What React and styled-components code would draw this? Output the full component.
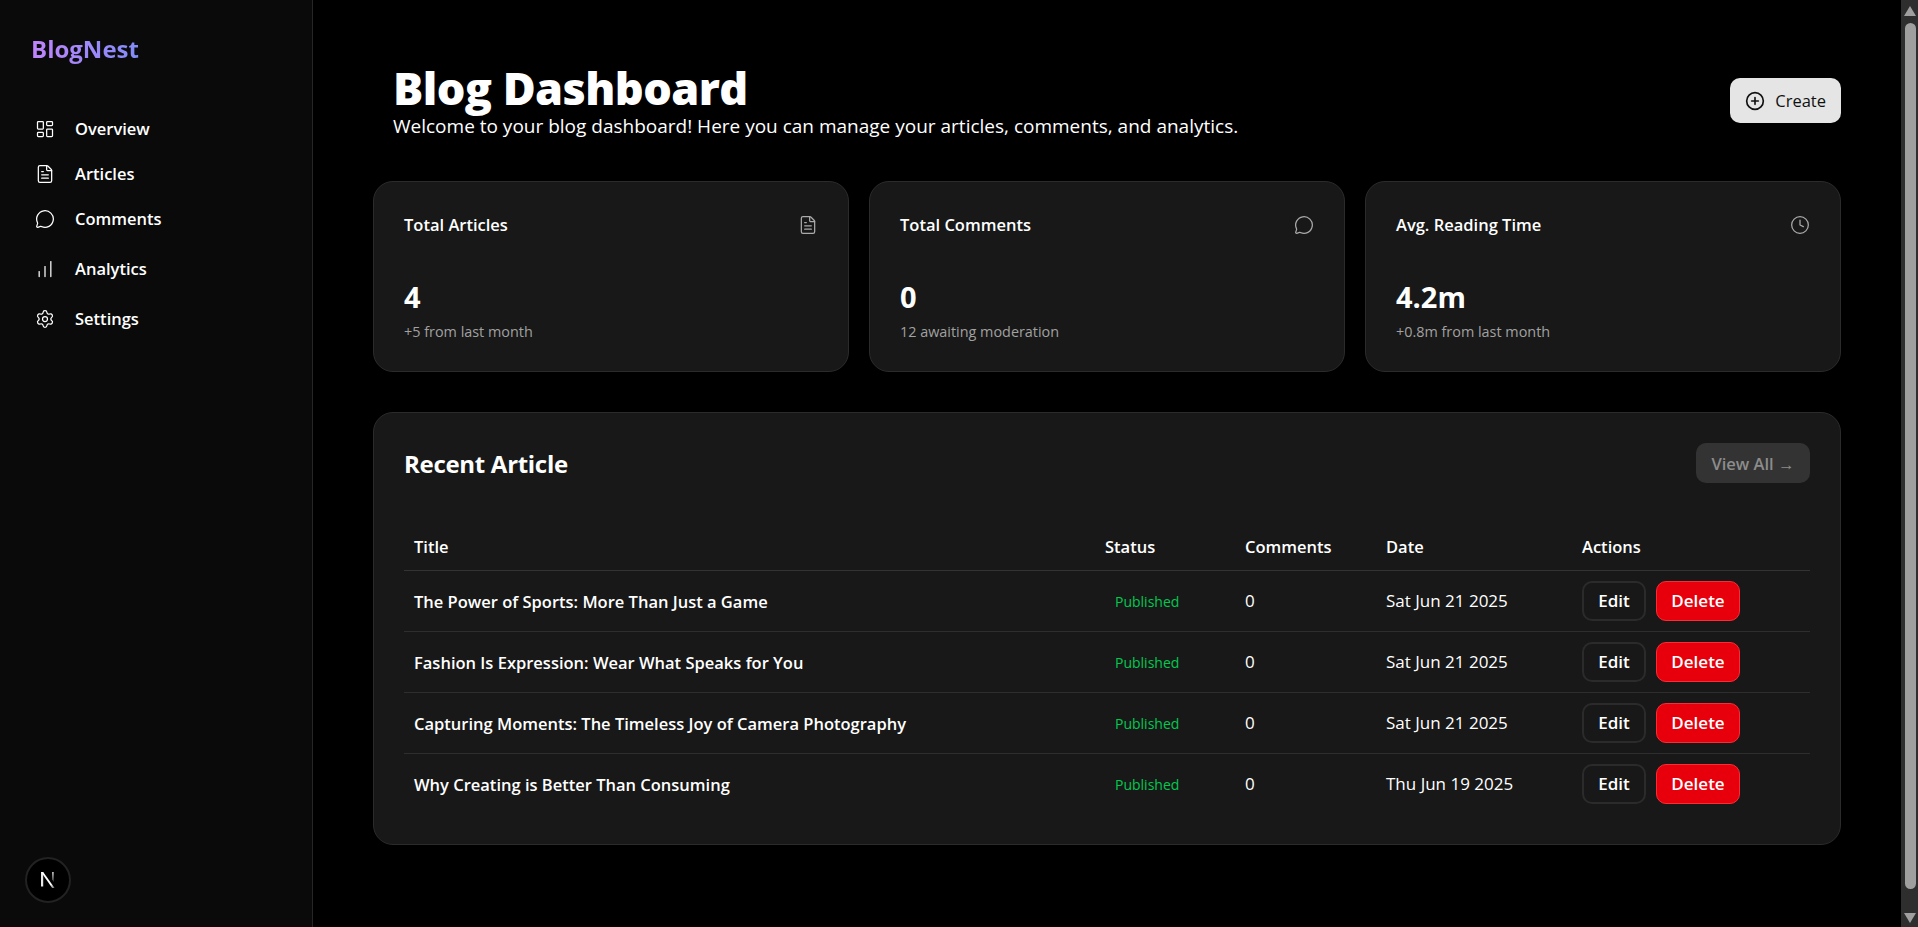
// App.jsx
import React from 'react';
import styled, { createGlobalStyle } from 'styled-components';
import {
  LayoutDashboard,
  FileText,
  MessageCircle,
  ChartNoAxesColumnIncreasing,
  Settings,
  CirclePlus,
  Clock,
} from 'lucide-react';

const GlobalStyle = createGlobalStyle`
  * {
    box-sizing: border-box;
  }

  html {
    background: #000;
  }

  body {
    margin: 0;
    background: #000;
    color: #fff;
    font-family: "Open Sans", "Noto Sans", "Liberation Sans", sans-serif;
  }
`;

const Layout = styled.div`
  display: flex;
  min-height: 927px;
  padding-right: 17px;
`;

const Sidebar = styled.aside`
  flex: 0 0 313px;
  padding: 30px;
  background: #0a0a0a;
  border-right: 1px solid #262626;
`;

const Logo = styled.div`
  font-size: 24px;
  line-height: 38px;
  font-weight: 700;
  background: linear-gradient(90deg, #c084fc, #818cf8);
  -webkit-background-clip: text;
  background-clip: text;
  color: transparent;
  width: fit-content;
  margin-left: 1px;
`;

const Nav = styled.nav`
  display: flex;
  flex-direction: column;
  margin-top: 38px;
`;

const NavItem = styled.a`
  display: flex;
  align-items: center;
  gap: 20px;
  height: ${(p) => p.$height}px;
  padding-left: 5px;
  color: #fff;
  font-size: 16.5px;
  font-weight: 600;
  text-decoration: none;
`;

const Main = styled.main`
  flex: 1;
  min-width: 0;
  padding: 60px 60px 0;
`;

const Header = styled.header`
  display: flex;
  justify-content: space-between;
  align-items: flex-start;
  padding-left: 20px;
  height: 121px;
`;

const Title = styled.h1`
  margin: 0;
  font-size: 45px;
  line-height: 56px;
  font-weight: 800;
  letter-spacing: -0.57px;
`;

const Subtitle = styled.p`
  margin: -2px 0 0;
  font-size: 19px;
  line-height: 24px;
`;

const CreateButton = styled.button`
  display: flex;
  align-items: center;
  gap: 10px;
  height: 45px;
  margin-top: 18px;
  padding: 0 15px;
  background: #e5e5e5;
  border: none;
  border-radius: 10px;
  color: #111;
  font-family: inherit;
  font-size: 16.5px;
  font-weight: 500;
`;

const Stats = styled.section`
  display: grid;
  grid-template-columns: repeat(3, 1fr);
  gap: 20px;
`;

const Card = styled.div`
  height: 191px;
  padding: 30px;
  background: #181818;
  border: 1px solid #2b2b2b;
  border-radius: 20px;
`;

const CardHead = styled.div`
  display: flex;
  justify-content: space-between;
  align-items: center;
  color: #aaa;
  height: 26px;
`;

const CardLabel = styled.span`
  margin-bottom: 2px;
  color: #fff;
  font-size: 16.5px;
  font-weight: 600;
`;

const CardValue = styled.div`
  margin-top: 40px;
  font-size: 29px;
  line-height: 38px;
  font-weight: 700;
`;

const CardNote = styled.div`
  margin-top: 6px;
  color: #a1a1a1;
  font-size: 14.4px;
  line-height: 20px;
`;

const Panel = styled.section`
  margin-top: 40px;
  padding: 30px;
  background: #181818;
  border: 1px solid #2b2b2b;
  border-radius: 20px;
`;

const PanelHead = styled.div`
  display: flex;
  justify-content: space-between;
  align-items: center;
  margin-bottom: 40px;
`;

const PanelTitle = styled.h2`
  margin: 0;
  font-size: 24px;
  font-weight: 700;
  letter-spacing: -0.3px;
`;

const ViewAll = styled.button`
  height: 40px;
  width: 114px;
  padding: 0;
  background: #333;
  border: none;
  border-radius: 10px;
  color: #8c8c8c;
  font-family: inherit;
  font-size: 16.5px;
  font-weight: 600;
`;

const Table = styled.table`
  width: 100%;
  table-layout: fixed;
  border-collapse: collapse;
`;

const Th = styled.th`
  height: 47px;
  padding: 0 10px;
  border-bottom: 1px solid #333;
  text-align: left;
  font-size: 16.5px;
  font-weight: 600;
`;

const Row = styled.tr`
  border-bottom: 1px solid #2e2e2e;

  &:last-child {
    border-bottom: none;
  }
`;

const Td = styled.td`
  height: 61px;
  padding: ${(p) => (p.$strong ? '2px' : '0')} 10px 0;
  font-size: ${(p) => (p.$strong ? 16.5 : 17)}px;
  font-weight: ${(p) => (p.$strong ? 600 : 400)};
`;

const Status = styled.span`
  padding: 0 10px;
  color: #00c950;
  font-size: 14px;
`;

const Actions = styled.div`
  display: flex;
  gap: 10px;
`;

const ActionButton = styled.button`
  height: 40px;
  width: ${(p) => (p.$danger ? 84 : 64)}px;
  padding: 0;
  background: ${(p) => (p.$danger ? '#e7000b' : 'transparent')};
  border: ${(p) => (p.$danger ? '1px solid #fb2c36' : '2px solid #2b2b2b')};
  border-radius: 10px;
  color: #fff;
  font-family: inherit;
  font-size: 17px;
  font-weight: 600;
`;

const DevBadge = styled.div`
  position: fixed;
  left: 25px;
  bottom: 24px;
  width: 46px;
  height: 46px;
  display: flex;
  align-items: center;
  justify-content: center;
  background: #000;
  border: 2px solid #222;
  border-radius: 50%;
`;

// The shot shows the browser's own scrollbar, which headless mode does not paint
const ScrollBar = styled.div`
  position: fixed;
  top: 0;
  right: 0;
  bottom: 0;
  width: 17px;
  display: flex;
  flex-direction: column;
  align-items: center;
  padding: 6px 0 4px;
  background: #2e2e2e;
`;

const ScrollArrow = styled.div`
  flex: none;
  width: 0;
  height: 0;
  margin-left: 1px;
  border-left: 6px solid transparent;
  border-right: 6px solid transparent;
  border-${(p) => (p.$down ? 'top' : 'bottom')}: 10px solid #9f9f9f;
`;

const ScrollThumb = styled.div`
  flex: 1;
  width: 11px;
  margin: 7px 0 24px 2px;
  background: #9f9f9f;
  border-radius: 6px;
`;

const navItems = [
  { label: 'Overview', icon: LayoutDashboard, height: 45 },
  { label: 'Articles', icon: FileText, height: 45 },
  { label: 'Comments', icon: MessageCircle, height: 45 },
  { label: 'Analytics', icon: ChartNoAxesColumnIncreasing, height: 55 },
  { label: 'Settings', icon: Settings, height: 45 },
];

const stats = [
  { label: 'Total Articles', icon: FileText, value: '4', note: '+5 from last month' },
  { label: 'Total Comments', icon: MessageCircle, value: '0', note: '12 awaiting moderation' },
  { label: 'Avg. Reading Time', icon: Clock, value: '4.2m', note: '+0.8m from last month' },
];

const articles = [
  { title: 'The Power of Sports: More Than Just a Game', date: 'Sat Jun 21 2025' },
  { title: 'Fashion Is Expression: Wear What Speaks for You', date: 'Sat Jun 21 2025' },
  { title: 'Capturing Moments: The Timeless Joy of Camera Photography', date: 'Sat Jun 21 2025' },
  { title: 'Why Creating is Better Than Consuming', date: 'Thu Jun 19 2025' },
];

const NextLogo = () => (
  <svg width="20" height="20" viewBox="0 0 20 20" fill="none">
    <defs>
      <linearGradient id="nextDiagonal" x1="4" y1="2" x2="17" y2="18" gradientUnits="userSpaceOnUse">
        <stop offset="0" stopColor="#ffffff" />
        <stop offset="0.75" stopColor="#ffffff" />
        <stop offset="1" stopColor="#555555" />
      </linearGradient>
      <linearGradient id="nextStem" x1="0" y1="2" x2="0" y2="12" gradientUnits="userSpaceOnUse">
        <stop offset="0" stopColor="#bbbbbb" />
        <stop offset="1" stopColor="#333333" />
      </linearGradient>
    </defs>
    <path d="M3 2H5.2V16.5H3Z" fill="#e8e8e8" />
    <path d="M3 2H5.2L16.6 18H14.2Z" fill="url(#nextDiagonal)" />
    <path d="M14 2H15.8V12L14 9.5Z" fill="url(#nextStem)" />
  </svg>
);

const App = () => {
  return (
    <>
      <GlobalStyle />
      <Layout>
        <Sidebar>
          <Logo>BlogNest</Logo>
          <Nav>
            {navItems.map((item) => (
              <NavItem key={item.label} href="#" $height={item.height}>
                <item.icon size={20} strokeWidth={1.5} />
                {item.label}
              </NavItem>
            ))}
          </Nav>
        </Sidebar>

        <Main>
          <Header>
            <div>
              <Title>Blog Dashboard</Title>
              <Subtitle>
                Welcome to your blog dashboard! Here you can manage your articles, comments, and analytics.
              </Subtitle>
            </div>
            <CreateButton>
              <CirclePlus size={20} strokeWidth={2} />
              Create
            </CreateButton>
          </Header>

          <Stats>
            {stats.map((stat) => (
              <Card key={stat.label}>
                <CardHead>
                  <CardLabel>{stat.label}</CardLabel>
                  <stat.icon size={20} strokeWidth={1.5} />
                </CardHead>
                <CardValue>{stat.value}</CardValue>
                <CardNote>{stat.note}</CardNote>
              </Card>
            ))}
          </Stats>

          <Panel>
            <PanelHead>
              <PanelTitle>Recent Article</PanelTitle>
              <ViewAll>View All →</ViewAll>
            </PanelHead>
            <Table>
              <colgroup>
                <col style={{ width: 691 }} />
                <col style={{ width: 140 }} />
                <col style={{ width: 141 }} />
                <col style={{ width: 196 }} />
                <col />
              </colgroup>
              <thead>
                <tr>
                  <Th>Title</Th>
                  <Th>Status</Th>
                  <Th>Comments</Th>
                  <Th>Date</Th>
                  <Th>Actions</Th>
                </tr>
              </thead>
              <tbody>
                {articles.map((article) => (
                  <Row key={article.title}>
                    <Td $strong>{article.title}</Td>
                    <Td>
                      <Status>Published</Status>
                    </Td>
                    <Td>0</Td>
                    <Td>{article.date}</Td>
                    <Td>
                      <Actions>
                        <ActionButton>Edit</ActionButton>
                        <ActionButton $danger>Delete</ActionButton>
                      </Actions>
                    </Td>
                  </Row>
                ))}
              </tbody>
            </Table>
          </Panel>
        </Main>
      </Layout>
      <DevBadge>
        <NextLogo />
      </DevBadge>
      <ScrollBar>
        <ScrollArrow />
        <ScrollThumb />
        <ScrollArrow $down />
      </ScrollBar>
    </>
  );
};

export default App;
